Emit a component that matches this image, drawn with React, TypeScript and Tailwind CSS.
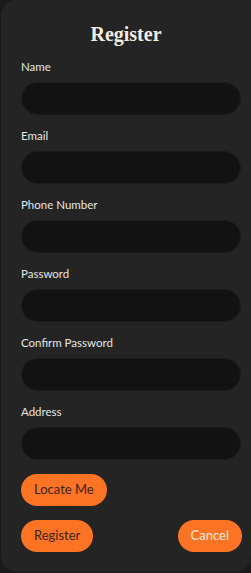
import React from "react";

const fields = ["Name", "Email", "Phone Number", "Password", "Confirm Password", "Address"];

export default function App() {
  return (
    <div className="w-[251px] h-[573px] bg-[#1a1a1a] overflow-hidden">
      <div
        className="ml-[1px] w-[250px] h-[572px] bg-[#242424] rounded-l-[16px] rounded-br-[16px] pt-[22px] px-[20px] flex flex-col"
        style={{ fontFamily: "Lato, 'Noto Sans', sans-serif" }}
      >
        <h1
          className="text-center text-[20px] leading-[24px] font-bold text-[#f2ede2]"
          style={{ fontFamily: "'Liberation Serif', serif" }}
        >
          Register
        </h1>
        <div className="mt-[14px] flex flex-col">
          {fields.map((f, i) => (
            <div key={f} className={i === 0 ? "flex flex-col" : "flex flex-col mt-[14px]"}>
              <label className="text-[11.5px] leading-[14px] text-[#e6e6e6]">{f}</label>
              <input
                className="mt-[8px] h-[33px] w-[220px] rounded-full bg-[#121212] border border-[#1b1b1b] outline-none"
                type="text"
              />
            </div>
          ))}
        </div>
        <div className="mt-[14px]">
          <button className="h-[32px] px-[13px] rounded-full bg-[#fd7324] text-[#3b2414] text-[13px]">
            Locate Me
          </button>
        </div>
        <div className="mt-[14px] flex justify-between w-[221px]">
          <button className="h-[32px] px-[13px] rounded-full bg-[#fd7324] text-[#3b2414] text-[13px]">
            Register
          </button>
          <button className="h-[32px] px-[13px] rounded-full bg-[#fd7324] text-[#f7e9dc] text-[13px]">
            Cancel
          </button>
        </div>
      </div>
    </div>
  );
}
